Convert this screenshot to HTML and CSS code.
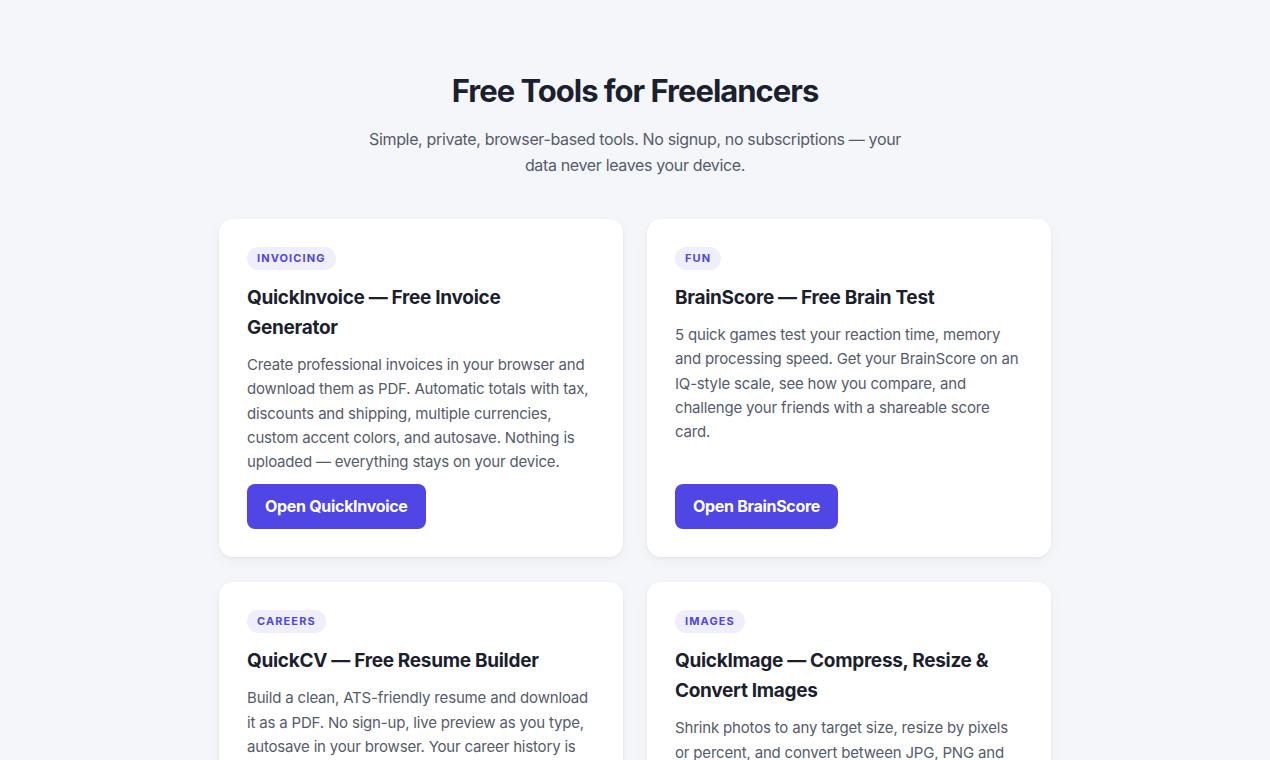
FILE: index.html
```html
<!DOCTYPE html>
<html lang="en">
<head>
<meta charset="utf-8">
<title>Free Tools for Freelancers</title>
<link rel="stylesheet" href="styles.css">
</head>
<body>
<main class="page">
  <header class="hero">
    <h1 class="hero-title">Free Tools for Freelancers</h1>
    <p class="hero-sub">Simple, private, browser-based tools. No signup, no subscriptions — your data never leaves your device.</p>
  </header>
  <section class="grid">
    <article class="card">
      <span class="badge">Invoicing</span>
      <h2 class="card-title">QuickInvoice — Free Invoice Generator</h2>
      <p class="card-text">Create professional invoices in your browser and download them as PDF. Automatic totals with tax, discounts and shipping, multiple currencies, custom accent colors, and autosave. Nothing is uploaded — everything stays on your device.</p>
      <a class="btn" href="#">Open QuickInvoice</a>
    </article>
    <article class="card">
      <span class="badge">Fun</span>
      <h2 class="card-title">BrainScore — Free Brain Test</h2>
      <p class="card-text">5 quick games test your reaction time, memory and processing speed. Get your BrainScore on an IQ-style scale, see how you compare, and challenge your friends with a shareable score card.</p>
      <a class="btn" href="#">Open BrainScore</a>
    </article>
    <article class="card">
      <span class="badge">Careers</span>
      <h2 class="card-title">QuickCV — Free Resume Builder</h2>
      <p class="card-text">Build a clean, ATS-friendly resume and download it as a PDF. No sign-up, live preview as you type, autosave in your browser. Your career history is never uploaded — it stays private on your device.</p>
      <a class="btn" href="#">Open QuickCV</a>
    </article>
    <article class="card">
      <span class="badge">Images</span>
      <h2 class="card-title">QuickImage — Compress, Resize &amp; Convert Images</h2>
      <p class="card-text">Shrink photos to any target size, resize by pixels or percent, and convert between JPG, PNG and WebP. Everything runs in your browser — your images are never uploaded.</p>
      <a class="btn" href="#">Open QuickImage</a>
    </article>
  </section>
</main>
</body>
</html>
```

FILE: styles.css
```css
* { box-sizing: border-box; }
html, body { margin: 0; padding: 0; }
body {
  background: #f5f6fa;
  font-family: Inter, "Noto Sans", "Liberation Sans", sans-serif;
  color: #1c1f2e;
}
.page {
  max-width: 832px;
  margin: 0 auto;
  padding: 72px 0 64px;
}
.hero {
  text-align: center;
  margin-bottom: 41px;
}
.hero-title {
  margin: 0;
  font-size: 31px;
  line-height: 38px;
  font-weight: 700;
  letter-spacing: -1px;
  color: #1c1f2e;
}
.hero-sub {
  margin: 16px auto 0;
  max-width: 545px;
  font-size: 16px;
  line-height: 26px;
  letter-spacing: -0.35px;
  color: #555b6b;
}
.grid {
  display: grid;
  grid-template-columns: 1fr 1fr;
  gap: 25px 24px;
}
.card {
  background: #ffffff;
  border-radius: 14px;
  padding: 28px;
  display: flex;
  flex-direction: column;
  align-items: flex-start;
  box-shadow: 0 1px 3px rgba(20, 24, 50, 0.06), 0 4px 14px rgba(20, 24, 50, 0.04);
}
.badge {
  display: inline-block;
  background: #efeffc;
  color: #4f46e5;
  font-size: 11px;
  font-weight: 700;
  letter-spacing: 1.1px;
  text-transform: uppercase;
  line-height: 15px;
  padding: 4px 10px;
  border-radius: 999px;
}
.card-title {
  margin: 13px 0 0;
  font-size: 19px;
  line-height: 30px;
  font-weight: 700;
  color: #1c1f2e;
  letter-spacing: -0.3px;
}
.card-text {
  margin: 10px 0 10px;
  font-size: 15px;
  line-height: 24.3px;
  letter-spacing: -0.18px;
  color: #555b6b;
}
.btn {
  margin-top: auto;
  display: inline-block;
  background: #4f46e5;
  color: #ffffff;
  text-decoration: none;
  font-size: 16px;
  font-weight: 700;
  line-height: 45px;
  height: 45px;
  padding: 0 18px;
  border-radius: 8px;
  letter-spacing: -0.3px;
}
```
